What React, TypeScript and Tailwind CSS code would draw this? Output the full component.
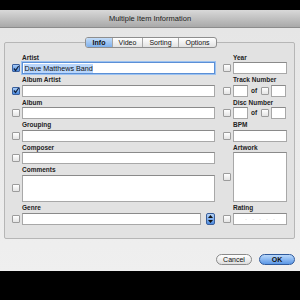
import type { ReactNode } from 'react';

const font = { fontFamily: '"Liberation Sans", Arial, sans-serif' };

function Check({ checked = false }: { checked?: boolean }) {
  if (checked) {
    return (
      <div className="w-[8px] h-[8px] shrink-0 rounded-[1px] border border-[#3a5f9c] bg-gradient-to-b from-[#a9cdf7] to-[#4a88dc] flex items-center justify-center">
        <svg width="7" height="7" viewBox="0 0 7 7">
          <path d="M1 3.5 L3 5.8 L6.6 0.6" fill="none" stroke="#10203a" strokeWidth="1.4" />
        </svg>
      </div>
    );
  }
  return (
    <div className="w-[8px] h-[8px] shrink-0 rounded-[1px] border border-[#9c9c9c] bg-gradient-to-b from-[#ffffff] to-[#e4e4e4]" />
  );
}

function Field({ className = '', children }: { className?: string; children?: ReactNode }) {
  return (
    <div className={`bg-white border border-[#a8a8a8] border-t-[#8a8a8a] ${className}`}>
      {children}
    </div>
  );
}

function Label({ children }: { children: ReactNode }) {
  return (
    <div className="h-[10px] flex items-end pb-[1px] text-[6.5px] font-bold text-[#222] leading-none">
      {children}
    </div>
  );
}

function LeftRow({ label, checked, tall }: { label: string; checked?: boolean; tall?: boolean }) {
  return (
    <div>
      <div className="pl-[10px]">
        <Label>{label}</Label>
      </div>
      <div className={`flex items-center gap-[1px] ${tall ? 'h-[27px]' : 'h-[12px]'}`}>
        <Check checked={checked} />
        <Field className="flex-1 h-full ml-[1px]" />
      </div>
    </div>
  );
}

function RightRow({ label, children }: { label: string; children: ReactNode }) {
  return (
    <div>
      <div className="pl-[10px]">
        <Label>{label}</Label>
      </div>
      {children}
    </div>
  );
}

export default function App() {
  const tabs = [
    { t: 'Info', w: 'w-[26px]' },
    { t: 'Video', w: 'w-[30px]' },
    { t: 'Sorting', w: 'w-[36px]' },
    { t: 'Options', w: 'w-[38px]' },
  ];

  return (
    <div className="w-[300px] h-[300px] bg-black flex flex-col" style={font}>
      <div className="h-[10px] shrink-0" />
      <div className="h-[18px] shrink-0 bg-gradient-to-b from-[#d9d9d9] to-[#a9a9a9] border-b border-[#8c8c8c] flex items-center justify-center text-[7.5px] text-[#1c1c1c] font-medium">
        Multiple Item Information
      </div>
      <div className="h-[243px] shrink-0 bg-gradient-to-b from-[#e6e6e6] to-[#efefef] flex flex-col pl-[4px] pr-[5px] pt-[9px]">
        <div className="flex justify-center relative z-10 -mb-[6px] pl-[3px]">
          <div className="flex h-[11px] rounded-[3px] border border-[#8e8e8e] bg-gradient-to-b from-[#ffffff] to-[#e2e2e2] overflow-hidden text-[7px] text-[#111] font-medium">
            {tabs.map((tab, i) => (
              <div
                key={tab.t}
                className={`${tab.w} flex items-center justify-center leading-none ${i > 0 ? 'border-l border-[#a6a6a6]' : ''} ${i === 0 ? 'bg-gradient-to-b from-[#c3dcf8] to-[#7eb0ec] font-bold' : ''}`}
              >
                {tab.t}
              </div>
            ))}
          </div>
        </div>
        <div className="h-[197px] border border-[#b6b6b6] rounded-[2px] bg-[#e2e2e2] pt-[9px] pl-[7px] pr-[7px] flex gap-[8px]">
          {/* left column */}
          <div className="w-[203px] flex flex-col gap-[0.6px]">
            <div>
              <div className="pl-[10px]">
                <Label>Artist</Label>
              </div>
              <div className="flex items-center gap-[1px] h-[12px]">
                <Check checked />
                <div className="flex-1 h-full ml-[1px] bg-white border border-[#5b8fd6] shadow-[0_0_0_1px_#9cc2f0] flex items-center px-[1px]">
                  <span className="bg-[#b9d6fb] text-[7.2px] leading-[9px] text-[#111] px-[0.5px]">Dave Matthews Band</span>
                </div>
              </div>
            </div>
            <LeftRow label="Album Artist" checked />
            <LeftRow label="Album" />
            <LeftRow label="Grouping" />
            <LeftRow label="Composer" />
            <LeftRow label="Comments" tall />
            <div>
              <div className="pl-[10px]">
                <Label>Genre</Label>
              </div>
              <div className="flex items-center gap-[1px] h-[12px]">
                <Check />
                <Field className="w-[182px] h-full ml-[1px]" />
                <div className="ml-[4px] w-[9px] h-[12px] rounded-[2px] border border-[#3a5f9c] bg-gradient-to-b from-[#b6d4f8] to-[#4d8ade] flex flex-col items-center justify-center gap-[2px]">
                  <svg width="5" height="3" viewBox="0 0 5 3"><path d="M0 3 L2.5 0 L5 3 Z" fill="#111" /></svg>
                  <svg width="5" height="3" viewBox="0 0 5 3"><path d="M0 0 L2.5 3 L5 0 Z" fill="#111" /></svg>
                </div>
              </div>
            </div>
          </div>
          {/* right column */}
          <div className="w-[64px] flex flex-col gap-[0.6px]">
            <RightRow label="Year">
              <div className="flex items-center gap-[2px] h-[12px]">
                <Check />
                <Field className="flex-1 h-full" />
              </div>
            </RightRow>
            {['Track Number', 'Disc Number'].map((l) => (
              <RightRow key={l} label={l}>
                <div className="flex items-center h-[12px]">
                  <Check />
                  <Field className="w-[15px] h-full ml-[2px]" />
                  <span className="text-[6.5px] font-bold text-[#222] ml-[3px] mr-[4px]">of</span>
                  <Check />
                  <Field className="w-[15px] h-full ml-[2px]" />
                </div>
              </RightRow>
            ))}
            <RightRow label="BPM">
              <div className="flex items-center gap-[2px] h-[12px]">
                <Check />
                <Field className="flex-1 h-full" />
              </div>
            </RightRow>
            <RightRow label="Artwork">
              <div className="flex items-center gap-[2px] h-[50px]">
                <Check />
                <Field className="flex-1 h-full" />
              </div>
            </RightRow>
            <RightRow label="Rating">
              <div className="flex items-center gap-[2px] h-[12px]">
                <Check />
                <Field className="flex-1 h-full flex items-center justify-center gap-[5px] text-[#b0b0b0] text-[6px] leading-none">
                  {[0, 1, 2, 3, 4].map((d) => (
                    <span key={d}>·</span>
                  ))}
                </Field>
              </div>
            </RightRow>
          </div>
        </div>
        <div className="flex justify-end gap-[7px] mt-[15px]">
          <div className="w-[36px] h-[11px] rounded-full border border-[#8a8a8a] bg-gradient-to-b from-[#ffffff] to-[#dedede] flex items-center justify-center text-[7px] font-medium text-[#111] leading-none">
            Cancel
          </div>
          <div className="w-[36px] h-[11px] rounded-full border border-[#2f5a9c] bg-gradient-to-b from-[#b9d8fb] to-[#5b97e6] flex items-center justify-center text-[7px] font-bold text-[#111] leading-none">
            OK
          </div>
        </div>
      </div>
    </div>
  );
}
